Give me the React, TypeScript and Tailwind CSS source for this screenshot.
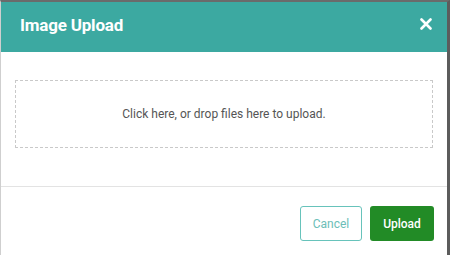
export default function App() {
  return (
    <div className="w-[450px] h-[255px] overflow-hidden bg-white border-t-2 border-t-[#6b6b6b] border-l border-l-[#cfcfcf] border-r-[3px] border-r-[#5c5c5c] font-['Roboto',sans-serif]">
      <div className="h-[50px] bg-[#3ca9a1] flex items-center justify-between pl-[19px] pr-[15px]">
        <h1 className="text-white font-bold text-[17px] tracking-[-0.2px] pb-[2px]">Image Upload</h1>
        <button className="text-white mb-[6px]">
          <svg width="12" height="12" viewBox="0 0 12 12">
            <path d="M1.5 1.5 L10.5 10.5 M10.5 1.5 L1.5 10.5" stroke="white" strokeWidth="2.6" strokeLinecap="round" />
          </svg>
        </button>
      </div>
      <div className="px-[14px] pt-[28px] pb-[38px] border-b border-b-[#e3e3e3]">
        <div className="h-[68px] border border-dashed border-[#c9c9c9] flex items-center justify-center text-[12px] text-[#555]">
          Click here, or drop files here to upload.
        </div>
      </div>
      <div className="flex justify-end gap-[8px] pt-[19px] pr-[13px]">
        <button className="h-[35px] w-[62px] rounded-[3px] border border-[#67c3bb] text-[#6cbeb7] text-[12px]">
          Cancel
        </button>
        <button className="h-[35px] w-[64px] rounded-[3px] bg-[#228b26] text-white text-[12px] font-medium">
          Upload
        </button>
      </div>
    </div>
  );
}
